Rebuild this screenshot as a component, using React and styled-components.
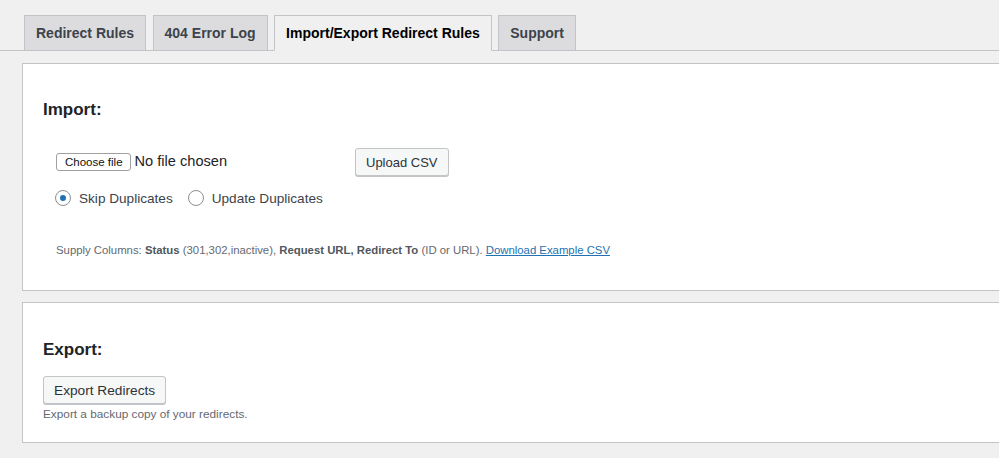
import React from "react";
import styled, { createGlobalStyle } from "styled-components";

const Global = createGlobalStyle`
  html, body { margin: 0; padding: 0; background: #f0f0f1; overflow: hidden; }
  body { font-family: "Liberation Sans", Arial, sans-serif; color: #1d2327; }
`;

const Wrap = styled.div`
  width: 1100px;
  padding: 15px 0 0 0;
`;

const TabBar = styled.nav`
  display: flex;
  align-items: flex-end;
  gap: 6.5px;
  padding-left: 24px;
  border-bottom: 1px solid #c3c4c7;
  height: 35px;
`;

const Tab = styled.a`
  box-sizing: border-box;
  height: ${(p) => (p.$active ? "36px" : "35px")};
  margin-bottom: ${(p) => (p.$active ? "-1px" : "0")};
  padding: 0 11px;
  display: flex;
  align-items: center;
  font-size: 14px;
  font-weight: 700;
  color: ${(p) => (p.$active ? "#000" : "#3c434a")};
  background: ${(p) => (p.$active ? "#f0f0f1" : "#dcdcde")};
  border: 1px solid #c3c4c7;
  border-bottom: ${(p) => (p.$active ? "1px solid #f0f0f1" : "none")};
  text-decoration: none;
  white-space: nowrap;
`;

const Panel = styled.section`
  box-sizing: border-box;
  margin: ${(p) => p.$mt} 0 0 22px;
  background: #fff;
  border: 1px solid #c3c4c7;
  height: ${(p) => p.$h};
  padding: ${(p) => p.$pt} 20px 0 20px;
`;

const Heading = styled.h3`
  margin: 0;
  font-size: 17px;
  line-height: 24px;
  font-weight: 700;
  color: #1d2327;
`;

const Form = styled.div`
  padding-left: 13px;
  margin-top: ${(p) => p.$mt};
`;

const FileRow = styled.div`
  display: grid;
  grid-template-columns: 299px auto;
  align-items: center;
`;

const FileField = styled.div`
  display: flex;
  align-items: center;
  gap: 4px;
`;

const FileButton = styled.span`
  box-sizing: border-box;
  height: 18px;
  padding: 0 7px 0 8px;
  display: inline-flex;
  align-items: center;
  font-size: 11.5px;
  color: #111;
  background: #fff;
  border: 1px solid #a0a0a0;
  border-radius: 3px;
`;

const FileText = styled.span`
  font-size: 14.6px;
  color: #1d2327;
  margin-top: -3px;
`;

const Button = styled.button`
  box-sizing: border-box;
  height: 28px;
  padding: 0 10px;
  font-family: inherit;
  font-size: ${(p) => p.$fs || "13px"};
  color: #2c3338;
  background: #f6f7f7;
  border: 1px solid #c3c4c7;
  border-radius: 3px;
  box-shadow: 0 1px 0 #c3c4c7;
  cursor: pointer;
`;

const RadioRow = styled.div`
  display: flex;
  align-items: center;
  margin-top: 14px;
  margin-left: -1px;
`;

const RadioLabel = styled.label`
  display: inline-flex;
  align-items: center;
  gap: 8px;
  font-size: 13.6px;
  color: #3c434a;
  margin-right: 15px;
`;

const RadioCircle = styled.span`
  box-sizing: border-box;
  width: 16px;
  height: 16px;
  border-radius: 50%;
  border: 1px solid #8c8f94;
  background: #fff;
  display: inline-flex;
  align-items: center;
  justify-content: center;
  &::after {
    content: "";
    width: 6px;
    height: 6px;
    border-radius: 50%;
    background: ${(p) => (p.$checked ? "#2271b1" : "transparent")};
  }
`;

const Note = styled.p`
  margin: 38px 0 0 0;
  font-size: 11.35px;
  color: #646970;
  b { font-weight: 700; color: #50575e; }
  a { color: #2271b1; text-decoration: underline; }
`;

const Caption = styled.p`
  margin: 3px 0 0 0;
  font-size: 11.8px;
  color: #646970;
`;

const ExportButton = styled(Button)`
  margin-top: 14px;
  display: block;
`;

export default function App() {
  return (
    <>
      <Global />
      <Wrap>
        <TabBar>
          <Tab href="#">Redirect Rules</Tab>
          <Tab href="#">404 Error Log</Tab>
          <Tab href="#" $active>Import/Export Redirect Rules</Tab>
          <Tab href="#">Support</Tab>
        </TabBar>

        <Panel $mt="12px" $h="228px" $pt="34px">
          <Heading>Import:</Heading>
          <Form $mt="26px">
            <FileRow>
              <FileField>
                <FileButton>Choose file</FileButton>
                <FileText>No file chosen</FileText>
              </FileField>
              <div>
                <Button>Upload CSV</Button>
              </div>
            </FileRow>
            <RadioRow>
              <RadioLabel>
                <RadioCircle $checked />
                Skip Duplicates
              </RadioLabel>
              <RadioLabel>
                <RadioCircle />
                Update Duplicates
              </RadioLabel>
            </RadioRow>
            <Note>
              Supply Columns: <b>Status</b> (301,302,inactive), <b>Request URL, Redirect To</b> (ID or URL).{" "}
              <a href="#">Download Example CSV</a>
            </Note>
          </Form>
        </Panel>

        <Panel $mt="11px" $h="141px" $pt="35px">
          <Heading>Export:</Heading>
          <ExportButton $fs="13.7px">Export Redirects</ExportButton>
          <Caption>Export a backup copy of your redirects.</Caption>
        </Panel>
      </Wrap>
    </>
  );
}
